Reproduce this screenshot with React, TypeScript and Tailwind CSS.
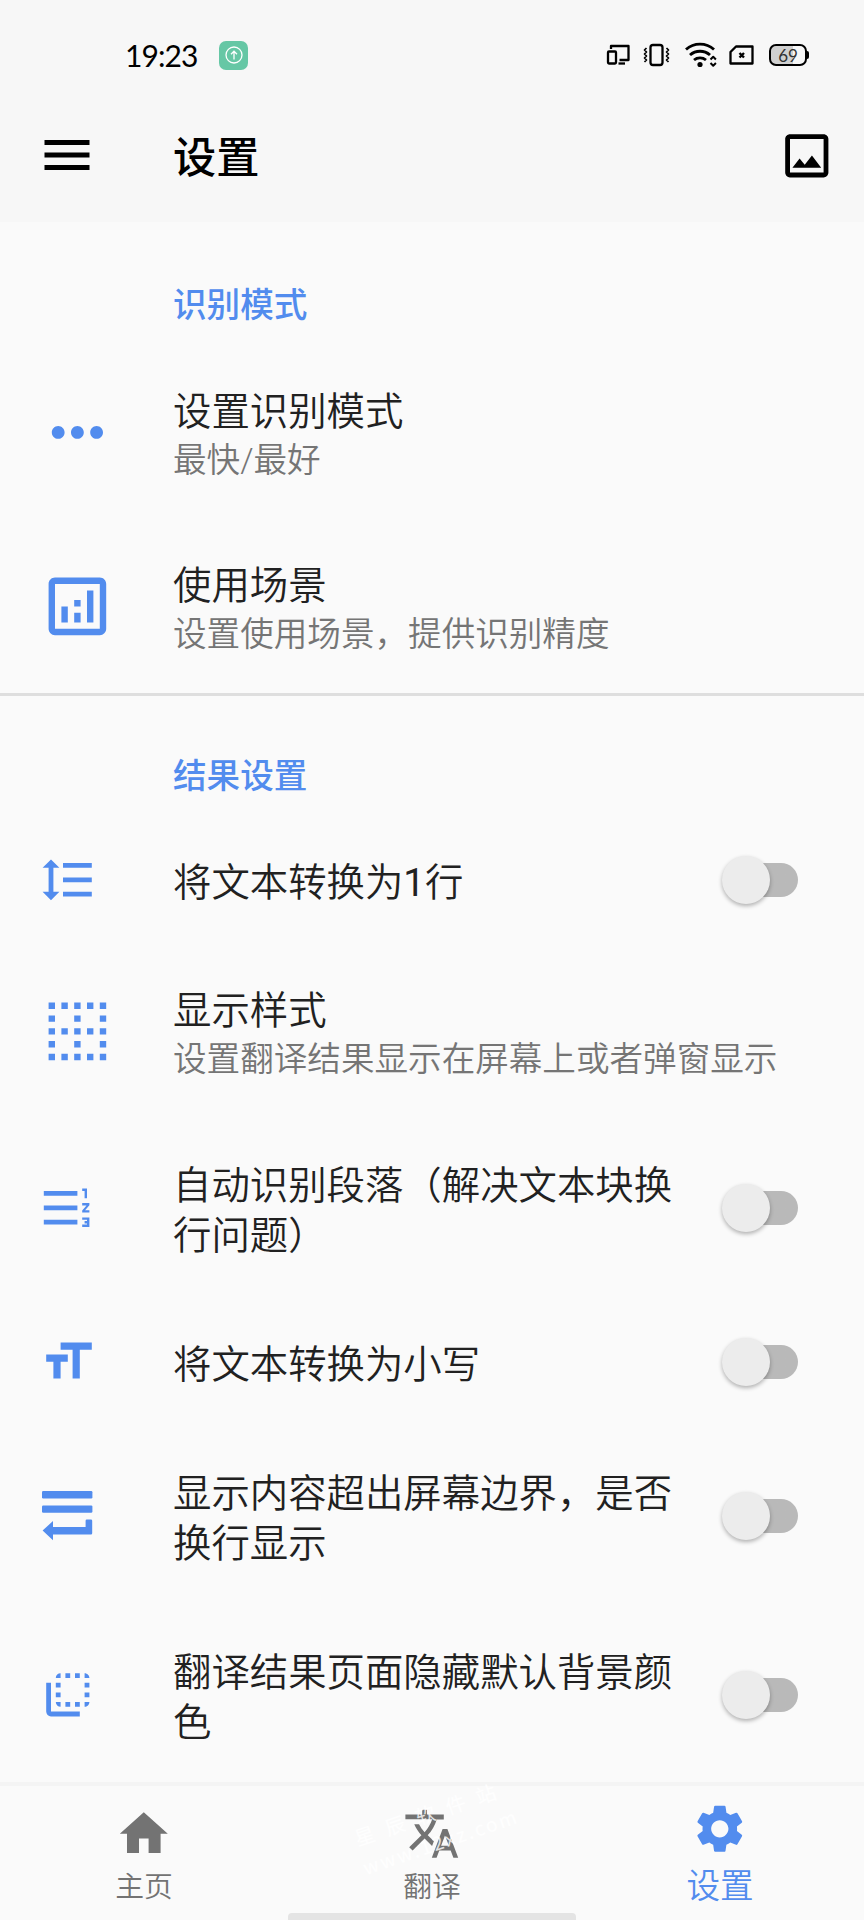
import React from "react";
import {
  MdBorderClear,
  MdFlipToBack,
  MdFormatLineSpacing,
  MdFormatListNumberedRtl,
  MdFormatSize,
  MdHome,
  MdMenu,
  MdMoreHoriz,
  MdOutlineAnalytics,
  MdOutlinePhoto,
  MdSettings,
  MdTranslate,
} from "react-icons/md";

const WrapIcon = () => (
  <svg viewBox="0 0 51 50" className="h-[50px] w-[51px]" fill="currentColor">
    <rect x="0" y="0" width="50.4" height="7.4" rx="1.2" />
    <rect x="0" y="14.4" width="50.4" height="7.4" rx="1.2" />
    <path d="M0.6 39.6 11 30v6h32.6v-6.2a1.2 1.2 0 0 1 1.2-1.2h4.2a1.2 1.2 0 0 1 1.2 1.2v12.4a1.2 1.2 0 0 1-1.2 1.2H11v5.8z" />
  </svg>
);

const StatusIcons = () => (
  <svg
    width="214"
    height="40"
    viewBox="0 0 214 40"
    fill="none"
    stroke="#000"
    strokeWidth="2.3"
    strokeLinejoin="round"
  >
    <path d="M11 14v-3h17.500v14h-9" />
    <rect x="8" y="16.500" width="8" height="12" rx="1" />
    <path d="M18.500 28.500h6.500" />
    <rect x="50.500" y="10" width="12" height="20" rx="2.500" />
    <path d="M46.500 13l-2 2 2 2-2 2 2 2-2 2 2 2-2 2M66.500 13l2 2-2 2 2 2-2 2 2 2-2 2 2 2" strokeWidth="1.700" />
    <path d="M86 14.500a21 21 0 0 1 28 0M90 20a15 15 0 0 1 20 0M94 25a9.500 9.500 0 0 1 12 0" strokeWidth="2.900" />
    <circle cx="100" cy="29.500" r="2.600" fill="#000" stroke="none" />
    <path d="M110.500 24.500l2.700-2.700 2.700 2.700M110.500 28l2.700 2.700 2.700-2.700" strokeWidth="2" />
    <path d="M136 11.500h16.500v17h-22V17z" />
    <path d="M139.500 18l4.500 4.500M144 18l-4.500 4.500" strokeWidth="2.400" />
  </svg>
);

type Item = {
  icon: React.ReactNode;
  title: string;
  summary?: string;
  toggle?: boolean;
};

const modeItems: Item[] = [
  { icon: <MdMoreHoriz size={76.8} />, title: "设置识别模式", summary: "最快/最好" },
  { icon: <MdOutlineAnalytics size={76.8} />, title: "使用场景", summary: "设置使用场景，提供识别精度" },
];

const resultItems: Item[] = [
  { icon: <MdFormatLineSpacing size={57.6} />, title: "将文本转换为1行", toggle: true },
  { icon: <MdBorderClear size={76.8} />, title: "显示样式", summary: "设置翻译结果显示在屏幕上或者弹窗显示" },
  { icon: <MdFormatListNumberedRtl size={57.6} />, title: "自动识别段落（解决文本块换行问题）", toggle: true },
  { icon: <MdFormatSize size={57.6} />, title: "将文本转换为小写", toggle: true },
  { icon: <WrapIcon />, title: "显示内容超出屏幕边界，是否换行显示", toggle: true },
  { icon: <MdFlipToBack size={57.6} />, title: "翻译结果页面隐藏默认背景颜色", toggle: true },
];

const Toggle = () => (
  <div className="mr-[66px] flex h-[34px] w-[72px] items-center rounded-full bg-gradient-to-r from-transparent from-30% to-[#b9b9b9] to-30%">
    <div className="-ml-[4px] h-12 w-12 shrink-0 rounded-full bg-[#ececec] shadow-[0_2px_4px_rgba(0,0,0,0.3)]" />
  </div>
);

const Category = ({ title }: { title: string }) => (
  <h2 className="pl-[173px] text-[33.6px] leading-[48px] font-medium text-[#528cee]">{title}</h2>
);

const SettingRow = ({ icon, title, summary, toggle }: Item) => {
  const twoLines = title.length > 12;
  return (
    <div className={`flex items-center ${summary ? "h-[174px]" : twoLines ? "h-[179px]" : "h-[129px]"}`}>
      <div className="flex w-[173px] shrink-0 pl-[38.6px] text-[#528cee]">
        <div className="flex min-w-[57.6px] justify-center">{icon}</div>
      </div>
      <div className="min-w-0 flex-1 pt-[7px]">
        <p className={`text-[38.4px] leading-[50.500px] font-[350] text-[#212121] ${toggle ? "w-[505px]" : ""}`}>
          {/* digits look too thin at the lighter weight */}
          {title.split(/(\d+)/).map((part, i) =>
            i % 2 ? (
              <span key={i} className="font-normal">
                {part}
              </span>
            ) : (
              part
            )
          )}
        </p>
        {summary && (
          <p className="text-[33.6px] leading-[46px] font-[350] whitespace-nowrap text-[#757575]">{summary}</p>
        )}
      </div>
      {toggle && <Toggle />}
    </div>
  );
};

const App = () => {
  return (
    <div className="flex h-[1920px] w-[864px] flex-col overflow-hidden bg-[#fafafa] font-['Roboto','Noto_Sans_CJK_SC',sans-serif]">
      <header className="h-[222px] shrink-0 bg-[#f7f7f7]">
        <div className="flex h-[110px] items-center pl-[125px]">
          <span className="w-[94px] font-['Lato'] text-[30px] leading-none tracking-[-0.9px]">19:23</span>
          <div className="flex h-[29px] w-[29px] items-center justify-center rounded-[7px] bg-[#66c7a5]">
            <svg width="18" height="18" viewBox="0 0 18 18" fill="none" stroke="#fff" strokeWidth="1.300">
              <circle cx="9" cy="9" r="8" />
              <path d="M9 13.500V5.500M6 8.200l3-3 3 3" />
            </svg>
          </div>
          <div className="ml-[352px] flex items-center">
            <StatusIcons />
          </div>
          <div className="-ml-[45px] flex items-center">
            <div className="flex h-[22px] w-[38px] items-center justify-center rounded-[7px] border-2 border-black bg-gradient-to-r from-[#d0d0d0] from-65% to-transparent to-65% font-['Lato'] text-[17px] leading-none text-[#333]">
              69
            </div>
            <div className="h-[8px] w-[2px] rounded-r bg-black" />
          </div>
        </div>
        <div className="flex h-[91px] items-center pr-[28px] pl-[37px]">
          <MdMenu size={60} className="mb-[2px]" />
          <h1 className="ml-[76px] flex-1 pt-[7px] text-[43.200px] leading-none font-medium">设置</h1>
          <MdOutlinePhoto size={57.6} />
        </div>
      </header>

      <main className="min-h-0 flex-1 overflow-hidden">
        <div className="pt-[60px] pb-[15px]">
          <Category title="识别模式" />
        </div>
        {modeItems.map((item) => (
          <SettingRow key={item.title} {...item} />
        ))}
        <div className="border-t-3 border-[#dedede] pt-[57px] pb-[14px]">
          <Category title="结果设置" />
        </div>
        {resultItems.map((item) => (
          <SettingRow key={item.title} {...item} />
        ))}
      </main>

      <nav className="relative grid h-[138px] shrink-0 grid-cols-3 border-t-4 border-[#f4f4f4] text-[#737373]">
        <div className="flex flex-col items-center pt-[19px]">
          <MdHome size={57.6} />
          <span className="pt-[3px] text-[28.8px] leading-[42px] font-[350]">主页</span>
        </div>
        <div className="flex flex-col items-center pt-[19px]">
          <MdTranslate size={57.6} />
          <span className="pt-[3px] text-[28.8px] leading-[42px] font-[350]">翻译</span>
        </div>
        <div className="flex flex-col items-center pt-[14px] text-[#528cee]">
          <MdSettings size={57.6} />
          <span className="pt-[4px] text-[33.6px] leading-[50px] font-[350]">设置</span>
        </div>
        <div className="absolute bottom-0 left-[288px] h-[7px] w-[288px] rounded-t-[4px] bg-[#e4e4e4]" />
        <div className="absolute top-[9px] left-[340px] w-[190px] -rotate-[19deg] text-center font-['Noto_Sans_CJK_SC'] text-white/80">
          <p className="text-[20px] leading-[34px] tracking-[12px]">星辰软件站</p>
          <p className="text-[19px] leading-[26px] tracking-[2.500px]">www.12xz.com</p>
        </div>
      </nav>
    </div>
  );
};

export default App;
